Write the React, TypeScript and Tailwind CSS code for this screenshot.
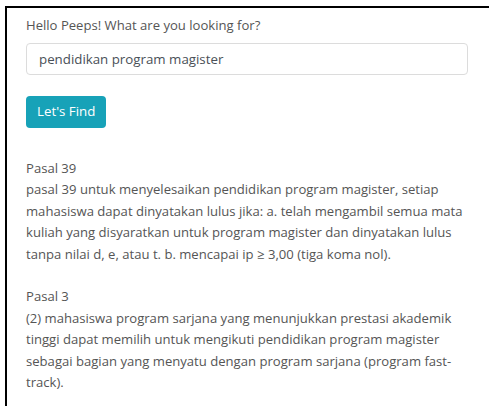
const results = [
  {
    title: "Pasal 39",
    body: "pasal 39 untuk menyelesaikan pendidikan program magister, setiap mahasiswa dapat dinyatakan lulus jika: a. telah mengambil semua mata kuliah yang disyaratkan untuk program magister dan dinyatakan lulus tanpa nilai d, e, atau t. b. mencapai ip ≥ 3,00 (tiga koma nol).",
  },
  {
    title: "Pasal 3",
    body: "(2) mahasiswa program sarjana yang menunjukkan prestasi akademik tinggi dapat memilih untuk mengikuti pendidikan program magister sebagai bagian yang menyatu dengan program sarjana (program fast-track).",
  },
];

export default function App() {
  return (
    <div className="h-[406px] w-[489px] overflow-hidden bg-white pl-[5px] pt-[6px]">
      <div
        className="h-full border-l-2 border-t-2 border-black pl-[19px] pr-[21px] pt-[7px] text-[13.1px] leading-[21.5px] text-[#555]"
        style={{ fontFamily: '"Open Sans", "Noto Sans", sans-serif' }}
      >
        <label className="block">Hello Peeps! What are you looking for?</label>
        <input
          className="mt-[6px] block h-[32px] w-full rounded-[4px] border border-[#dcdcdc] px-[12px] text-[13.3px] text-[#495057] outline-none"
          defaultValue="pendidikan program magister"
        />
        <button className="mt-[21px] h-[32px] rounded-[4px] bg-[#17a2b8] px-[11px] text-[13.3px] text-white">
          Let's Find
        </button>

        <div className="mt-[30px] flex flex-col gap-[21px]">
          {results.map((r) => (
            <div key={r.title}>
              <div>{r.title}</div>
              <div>{r.body}</div>
            </div>
          ))}
        </div>
      </div>
    </div>
  );
}
